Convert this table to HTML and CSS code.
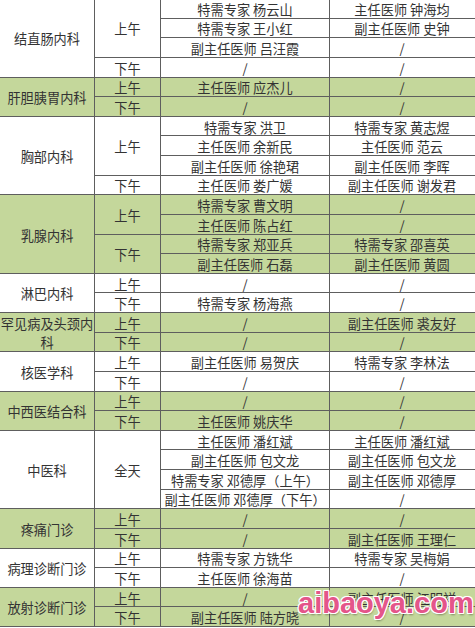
FILE: index.html
```html
<!DOCTYPE html>
<html lang="zh-CN">
<head>
<meta charset="utf-8">
<title>门诊排班表</title>
<link rel="stylesheet" href="styles.css">
</head>
<body>
<div class="page">
  <div class="grid">
    <div class="c s4">结直肠内科</div>
    <div class="c s3">上午</div>
    <div class="c">特需专家 杨云山</div>
    <div class="c d2">主任医师 钟海均</div>
    <div class="c">特需专家 王小红</div>
    <div class="c d2">副主任医师 史钟</div>
    <div class="c">副主任医师 吕汪霞</div>
    <div class="c d2">/</div>
    <div class="c">下午</div>
    <div class="c">/</div>
    <div class="c d2">/</div>

    <div class="c g s2">肝胆胰胃内科</div>
    <div class="c g">上午</div>
    <div class="c g">主任医师 应杰儿</div>
    <div class="c g d2">/</div>
    <div class="c g">下午</div>
    <div class="c g">/</div>
    <div class="c g d2">/</div>

    <div class="c s4">胸部内科</div>
    <div class="c s3">上午</div>
    <div class="c">特需专家 洪卫</div>
    <div class="c d2">特需专家 黄志煜</div>
    <div class="c">主任医师 余新民</div>
    <div class="c d2">主任医师 范云</div>
    <div class="c">副主任医师 徐艳珺</div>
    <div class="c d2">副主任医师 李晖</div>
    <div class="c">下午</div>
    <div class="c">主任医师 娄广媛</div>
    <div class="c d2">副主任医师 谢发君</div>

    <div class="c g s4">乳腺内科</div>
    <div class="c g s2">上午</div>
    <div class="c g">特需专家 曹文明</div>
    <div class="c g d2">/</div>
    <div class="c g">主任医师 陈占红</div>
    <div class="c g d2">/</div>
    <div class="c g s2">下午</div>
    <div class="c g">特需专家 郑亚兵</div>
    <div class="c g d2">特需专家 邵喜英</div>
    <div class="c g">副主任医师 石磊</div>
    <div class="c g d2">副主任医师 黄圆</div>

    <div class="c s2">淋巴内科</div>
    <div class="c">上午</div>
    <div class="c">/</div>
    <div class="c d2">/</div>
    <div class="c">下午</div>
    <div class="c">特需专家 杨海燕</div>
    <div class="c d2">/</div>

    <div class="c g s2 wrap">罕见病及头颈内科</div>
    <div class="c g">上午</div>
    <div class="c g">/</div>
    <div class="c g d2">副主任医师 裘友好</div>
    <div class="c g">下午</div>
    <div class="c g">/</div>
    <div class="c g d2">/</div>

    <div class="c s2">核医学科</div>
    <div class="c">上午</div>
    <div class="c">副主任医师 易贺庆</div>
    <div class="c d2">特需专家 李林法</div>
    <div class="c">下午</div>
    <div class="c">/</div>
    <div class="c d2">/</div>

    <div class="c g s2">中西医结合科</div>
    <div class="c g">上午</div>
    <div class="c g">/</div>
    <div class="c g d2">/</div>
    <div class="c g">下午</div>
    <div class="c g">主任医师 姚庆华</div>
    <div class="c g d2">/</div>

    <div class="c s4">中医科</div>
    <div class="c s4">全天</div>
    <div class="c">主任医师 潘红斌</div>
    <div class="c d2">主任医师 潘红斌</div>
    <div class="c">副主任医师 包文龙</div>
    <div class="c d2">副主任医师 包文龙</div>
    <div class="c">特需专家 邓德厚（上午）</div>
    <div class="c d2">副主任医师 邓德厚</div>
    <div class="c">副主任医师 邓德厚（下午）</div>
    <div class="c d2">/</div>

    <div class="c g s2">疼痛门诊</div>
    <div class="c g">上午</div>
    <div class="c g">/</div>
    <div class="c g d2">/</div>
    <div class="c g">下午</div>
    <div class="c g">/</div>
    <div class="c g d2">副主任医师 王理仁</div>

    <div class="c s2">病理诊断门诊</div>
    <div class="c">上午</div>
    <div class="c">特需专家 方铣华</div>
    <div class="c d2">特需专家 吴梅娟</div>
    <div class="c">下午</div>
    <div class="c">主任医师 徐海苗</div>
    <div class="c d2">/</div>

    <div class="c g s2">放射诊断门诊</div>
    <div class="c g">上午</div>
    <div class="c g">/</div>
    <div class="c g d2">副主任医师 江明祥</div>
    <div class="c g">下午</div>
    <div class="c g">副主任医师 陆方晓</div>
    <div class="c g d2">/</div>
  </div>
  <div class="watermark">aibaoya.com</div>
</div>
</body>
</html>
```
FILE: styles.css
```css
html, body {
  margin: 0;
  padding: 0;
  background: #ffffff;
}
body {
  width: 475px;
  height: 628px;
  overflow: hidden;
}
.page {
  position: relative;
  width: 475px;
  height: 628px;
  overflow: hidden;
}
.grid {
  display: grid;
  grid-template-columns: 94px 65px 168px 150px;
  grid-template-rows: repeat(32, 18.63px);
  gap: 1px;
  background: #5e5e5e;
  margin-top: -1px;
  margin-left: 0;
  width: 480px;
  padding-bottom: 1px;
  font-family: "Noto Sans CJK SC", "Noto Sans", sans-serif;
  font-size: 13.2px;
  color: #333333;
}
.c {
  background: #ffffff;
  display: flex;
  align-items: center;
  justify-content: center;
  text-align: center;
  white-space: nowrap;
  line-height: 19px;
  padding-top: 2px;
  box-sizing: border-box;
}
.d2 {
  padding-right: 6px;
}
.g {
  background: #c4d79b;
}
.s2 { grid-row: span 2; }
.s3 { grid-row: span 3; }
.s4 { grid-row: span 4; }
.wrap {
  white-space: normal;
  word-break: break-all;
}
.watermark {
  position: absolute;
  left: 298px;
  top: 589px;
  font-family: "Liberation Sans", Arial, sans-serif;
  font-weight: bold;
  font-size: 29px;
  line-height: 29px;
  color: #e4558a;
  text-shadow: 1px 0 0 #fff, -1px 0 0 #fff, 0 1px 0 #fff, 0 -1px 0 #fff,
    1px 1px 0 #fff, -1px -1px 0 #fff, 1px -1px 0 #fff, -1px 1px 0 #fff,
    1px 2px 2px rgba(0, 0, 0, 0.35);
}
```
